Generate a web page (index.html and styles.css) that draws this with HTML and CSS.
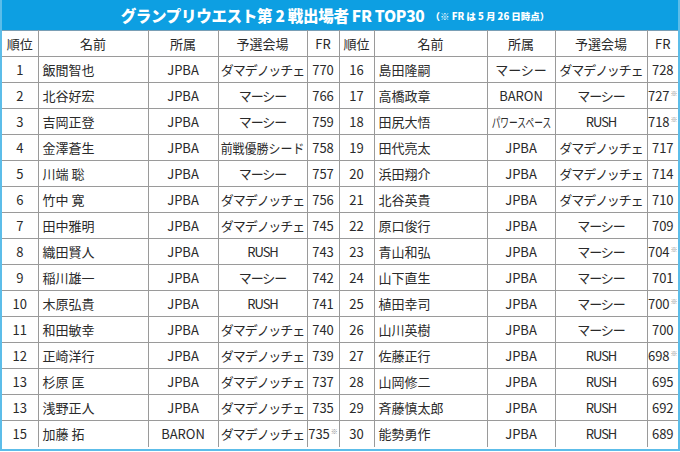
FILE: index.html
```html
<!DOCTYPE html>
<html lang="ja">
<head>
<meta charset="utf-8">
<title>グランプリウエスト第2戦出場者 FR TOP30</title>
<link rel="stylesheet" href="styles.css">
</head>
<body>
<div class="frame">
  <div class="title"><span class="main">グランプリウエスト第 2 戦出場者 FR TOP30</span><span class="note">（※ FR は 5 月 26 日時点）</span></div>
  <table class="rank">
    <colgroup>
      <col class="c-rank"><col class="c-name"><col class="c-org"><col class="c-venue"><col class="c-fr">
      <col class="c-rank2"><col class="c-name2"><col class="c-org2"><col class="c-venue2"><col class="c-fr2">
    </colgroup>
    <thead>
      <tr><th>順位</th><th>名前</th><th>所属</th><th>予選会場</th><th>FR</th><th>順位</th><th>名前</th><th>所属</th><th>予選会場</th><th>FR</th></tr>
    </thead>
    <tbody>
      <tr><td>1</td><td class="name">飯間智也</td><td>JPBA</td><td>ダマデノッチェ</td><td>770</td><td>16</td><td class="name">島田隆嗣</td><td>マーシー</td><td>ダマデノッチェ</td><td>728</td></tr>
      <tr><td>2</td><td class="name">北谷好宏</td><td>JPBA</td><td>マーシー</td><td>766</td><td>17</td><td class="name">高橋政章</td><td>BARON</td><td>マーシー</td><td>727<sup>※</sup></td></tr>
      <tr><td>3</td><td class="name">吉岡正登</td><td>JPBA</td><td>マーシー</td><td>759</td><td>18</td><td class="name">田尻大悟</td><td><span class="narrow">パワースペース</span></td><td>RUSH</td><td>718<sup>※</sup></td></tr>
      <tr><td>4</td><td class="name">金澤蒼生</td><td>JPBA</td><td><span class="semi">前戦優勝シード</span></td><td>758</td><td>19</td><td class="name">田代亮太</td><td>JPBA</td><td>ダマデノッチェ</td><td>717</td></tr>
      <tr><td>5</td><td class="name">川端 聡</td><td>JPBA</td><td>マーシー</td><td>757</td><td>20</td><td class="name">浜田翔介</td><td>JPBA</td><td>ダマデノッチェ</td><td>714</td></tr>
      <tr><td>6</td><td class="name">竹中 寛</td><td>JPBA</td><td>ダマデノッチェ</td><td>756</td><td>21</td><td class="name">北谷英貴</td><td>JPBA</td><td>ダマデノッチェ</td><td>710</td></tr>
      <tr><td>7</td><td class="name">田中雅明</td><td>JPBA</td><td>ダマデノッチェ</td><td>745</td><td>22</td><td class="name">原口俊行</td><td>JPBA</td><td>マーシー</td><td>709</td></tr>
      <tr><td>8</td><td class="name">織田賢人</td><td>JPBA</td><td>RUSH</td><td>743</td><td>23</td><td class="name">青山和弘</td><td>JPBA</td><td>マーシー</td><td>704<sup>※</sup></td></tr>
      <tr><td>9</td><td class="name">稲川雄一</td><td>JPBA</td><td>マーシー</td><td>742</td><td>24</td><td class="name">山下直生</td><td>JPBA</td><td>マーシー</td><td>701</td></tr>
      <tr><td>10</td><td class="name">木原弘貴</td><td>JPBA</td><td>RUSH</td><td>741</td><td>25</td><td class="name">植田幸司</td><td>JPBA</td><td>マーシー</td><td>700<sup>※</sup></td></tr>
      <tr><td>11</td><td class="name">和田敏幸</td><td>JPBA</td><td>ダマデノッチェ</td><td>740</td><td>26</td><td class="name">山川英樹</td><td>JPBA</td><td>マーシー</td><td>700</td></tr>
      <tr><td>12</td><td class="name">正崎洋行</td><td>JPBA</td><td>ダマデノッチェ</td><td>739</td><td>27</td><td class="name">佐藤正行</td><td>JPBA</td><td>RUSH</td><td>698<sup>※</sup></td></tr>
      <tr><td>13</td><td class="name">杉原 匡</td><td>JPBA</td><td>ダマデノッチェ</td><td>737</td><td>28</td><td class="name">山岡修二</td><td>JPBA</td><td>RUSH</td><td>695</td></tr>
      <tr><td>13</td><td class="name">浅野正人</td><td>JPBA</td><td>ダマデノッチェ</td><td>735</td><td>29</td><td class="name">斉藤慎太郎</td><td>JPBA</td><td>RUSH</td><td>692</td></tr>
      <tr><td>15</td><td class="name">加藤 拓</td><td>BARON</td><td>ダマデノッチェ</td><td>735<sup>※</sup></td><td>30</td><td class="name">能勢勇作</td><td>JPBA</td><td>RUSH</td><td>689</td></tr>
    </tbody>
  </table>
</div>
</body>
</html>
```
FILE: styles.css
```css
html, body {
  margin: 0;
  padding: 0;
  background: #ffffff;
}
.frame {
  width: 680px;
  height: 451px;
  box-sizing: border-box;
  border-left: 2px solid #5cbde9;
  border-right: 2px solid #5cbde9;
  border-bottom: 2px solid #5cbde9;
  font-family: "Noto Sans CJK JP", "Noto Sans", sans-serif;
  color: #2a2a2a;
  overflow: hidden;
}
.title {
  height: 30px;
  margin: 0 -2px;
  background: #0d9fe2;
  color: #ffffff;
  display: flex;
  align-items: center;
  justify-content: center;
  padding-right: 10px;
  font-weight: 900;
}
.title .main {
  font-size: 15.5px;
  letter-spacing: -0.3px;
}
.title .note {
  font-size: 9.5px;
  margin-left: 6px;
  margin-top: 2px;
}
.rank {
  width: 676px;
  border-collapse: collapse;
  table-layout: fixed;
  font-size: 13px;
}
.c-rank { width: 36px; }
.c-name { width: 110px; }
.c-org { width: 70px; }
.c-venue { width: 89px; }
.c-fr { width: 32px; }
.c-rank2 { width: 35px; }
.c-name2 { width: 113px; }
.c-org2 { width: 68px; }
.c-venue2 { width: 92px; }
.c-fr2 { width: 31px; }
.rank tr {
  height: 26px;
}
.rank th,
.rank td {
  border: 1px solid #9a9a9a;
  padding: 0;
  text-align: center;
  white-space: nowrap;
  font-weight: 400;
  line-height: 24px;
  overflow: visible;
}
.rank tbody td:nth-child(4),
.rank tbody td:nth-child(9) {
  letter-spacing: -1px;
}
.rank thead th {
  border-top-color: #7a9fb5;
}
.rank tr > :first-child {
  border-left: none;
}
.rank tr > :last-child {
  border-right: none;
}
.rank tbody tr:last-child td {
  border-bottom: none;
}
.rank td.name {
  text-align: left;
  padding-left: 4px;
}
.rank sup {
  font-size: 7px;
  color: #8a8a8a;
  vertical-align: 5px;
  line-height: 0;
  margin-left: 1px;
}
.narrow {
  display: inline-block;
  transform: scaleX(0.67);
  margin: 0 -15px;
  letter-spacing: 0;
}
.semi {
  display: inline-block;
  transform: scaleX(0.92);
  margin: 0 -4px;
  letter-spacing: 0;
}
```
